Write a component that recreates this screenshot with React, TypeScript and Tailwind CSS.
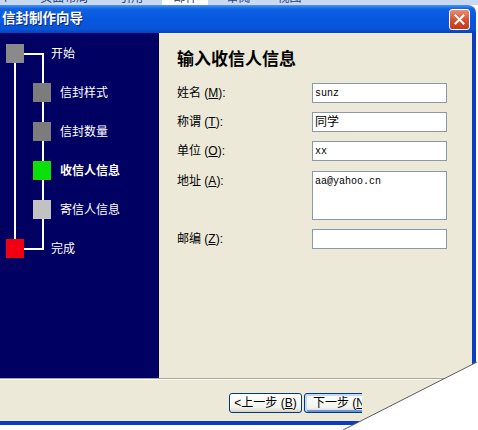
import React from 'react';

const cjk = "font-['Liberation_Sans','Noto_Sans_CJK_SC',sans-serif]";
const mono = "font-['Liberation_Mono','Noto_Sans_CJK_SC',monospace]";

const steps = [
  { label: "开始", box: "bg-[#8a8a8a]", outer: true },
  { label: "信封样式", box: "bg-[#7c7c7c]" },
  { label: "信封数量", box: "bg-[#7c7c7c]" },
  { label: "收信人信息", box: "bg-[#0be00b]", bold: true },
  { label: "寄信人信息", box: "bg-[#c2c2c2]" },
  { label: "完成", box: "bg-[#f00010]", outer: true },
];

const fields = [
  { name: "姓名", key: "M", value: "sunz", mono: true },
  { name: "称谓", key: "T", value: "同学" },
  { name: "单位", key: "O", value: "xx", mono: true },
  { name: "地址", key: "A", value: "aa@yahoo.cn", mono: true, tall: true },
  { name: "邮编", key: "Z", value: "" },
];

export default function App() {
  return (
    <div className={`relative w-[478px] h-[430px] overflow-hidden bg-white ${cjk}`}>
      {/* ribbon strip peeking above the dialog */}
      <div className="h-[5px] overflow-hidden bg-[#c8d9f1] flex text-[12px] leading-[12px] text-[#2a4276]">
        <span className="-mt-[8px] ml-[3px]">\</span>
        <span className="-mt-[8px] ml-[34px]">页面布局</span>
        <span className="-mt-[8px] ml-[31px]">引用</span>
        <span className="-mt-[8px] ml-[19px] bg-white px-[11px]">邮件</span>
        <span className="-mt-[8px] ml-[18px]">审阅</span>
        <span className="-mt-[8px] ml-[27px]">视图</span>
      </div>

      <div className="w-[476px]">
        {/* title bar */}
        <div className="h-[28px] rounded-tr-[8px] bg-[linear-gradient(180deg,#4a94f6_0%,#0d62e3_14%,#0656df_55%,#0a55d6_85%,#0443bd_100%)] flex items-center justify-between pl-[2px] pr-[6px]">
          <span className="text-white font-bold text-[13.5px] leading-none [text-shadow:1px_1px_#0b2a80]">信封制作向导</span>
          <div className="w-[21px] h-[21px] rounded-[3px] border border-white bg-[linear-gradient(180deg,#ec8d72,#d3502f_55%,#c23c1c)] flex items-center justify-center">
            <svg width="11" height="11" viewBox="0 0 11 11">
              <path d="M1.5 1.5 L9.5 9.5 M9.5 1.5 L1.5 9.5" stroke="#fff" strokeWidth="2" strokeLinecap="square" />
            </svg>
          </div>
        </div>

        <div className="border-r-4 border-[#0c3cc2]">
          <div className="flex h-[345px]">
            {/* step tree */}
            <div className="relative w-[159px] bg-[#000063] border-r border-[#00003e]">
              <svg className="absolute inset-0" width="158" height="345">
                <rect x="14" y="30" width="2" height="176" fill="#fff" />
                <rect x="24" y="20" width="19" height="2" fill="#fff" />
                <rect x="42" y="20" width="2" height="197" fill="#fff" />
                <rect x="24" y="215" width="19" height="2" fill="#fff" />
              </svg>
              <div className="relative pt-[1px] flex flex-col">
                {steps.map((s) => (
                  <div key={s.label} className={`h-[39px] flex items-center ${s.outer ? "pl-[6px] gap-[27px]" : "pl-[33px] gap-[9px]"}`}>
                    <div className={`w-[18px] h-[19px] ${s.box}`} />
                    <span className={`text-white text-[12px] leading-none ${s.bold ? "font-bold" : ""}`}>{s.label}</span>
                  </div>
                ))}
              </div>
            </div>

            {/* form */}
            <div className="flex-1 bg-[#ece9d8] pl-[18px] pt-[17px]">
              <h1 className="text-[17px] leading-[20px] font-bold text-black">输入收信人信息</h1>
              <div className="mt-[13px] flex flex-col gap-[9px]">
                {fields.map((f) => (
                  <div key={f.key} className={`flex ${f.tall ? "mt-[1px]" : ""}`}>
                    <div className="w-[135px] h-[20px] flex items-center text-[12px] text-black">
                      {f.name} ({<u>{f.key}</u>}):
                    </div>
                    <div className={`w-[135px] ${f.tall ? "h-[49px] items-start pt-[2px]" : "h-[20px] items-center"} flex bg-white border border-[#8899a8] pl-[2px] text-black ${f.mono ? `${mono} text-[10px]` : "text-[12px]"}`}>
                      {f.value}
                    </div>
                  </div>
                ))}
              </div>
            </div>
          </div>

          {/* separator */}
          <div className="h-[2px] border-t border-[#aca899] bg-white" />

          {/* buttons */}
          <div className="h-[41px] bg-[#ece9d8] pt-[13px] pl-[229px] flex gap-[2px]">
            <button className="w-[73px] h-[20px] rounded-[3px] border border-[#003c74] bg-[linear-gradient(180deg,#ffffff,#f3f3ee_75%,#d8d3c8)] flex items-center justify-center text-[12px] leading-none text-black">
              &lt;上一步 (<u>B</u>)
            </button>
            <div className="w-[58px] h-[20px] overflow-hidden">
              <button className="w-[73px] h-[20px] rounded-[3px] border border-[#003c74] bg-[linear-gradient(180deg,#ffffff,#f3f3ee_75%,#d8d3c8)] shadow-[inset_1px_1px_0_1px_#c4d8fb,inset_-1px_-1px_0_1px_#6d93e4] flex items-center justify-start pl-[8px] text-[12px] leading-none text-black whitespace-nowrap">
                下一步 (<u>N</u>)
              </button>
            </div>
          </div>
        </div>

        {/* bottom frame */}
        <div className="h-[4px] bg-[#0c3cc2]" />
      </div>

      {/* page curl */}
      <svg className="absolute top-0 left-0 pointer-events-none" width="478" height="430">
        <polygon points="343,430 477,362 478,362 478,430" fill="#fff" />
        <line x1="343" y1="430" x2="477" y2="362" stroke="#5c5c5c" strokeWidth="1" />
      </svg>
    </div>
  );
}
